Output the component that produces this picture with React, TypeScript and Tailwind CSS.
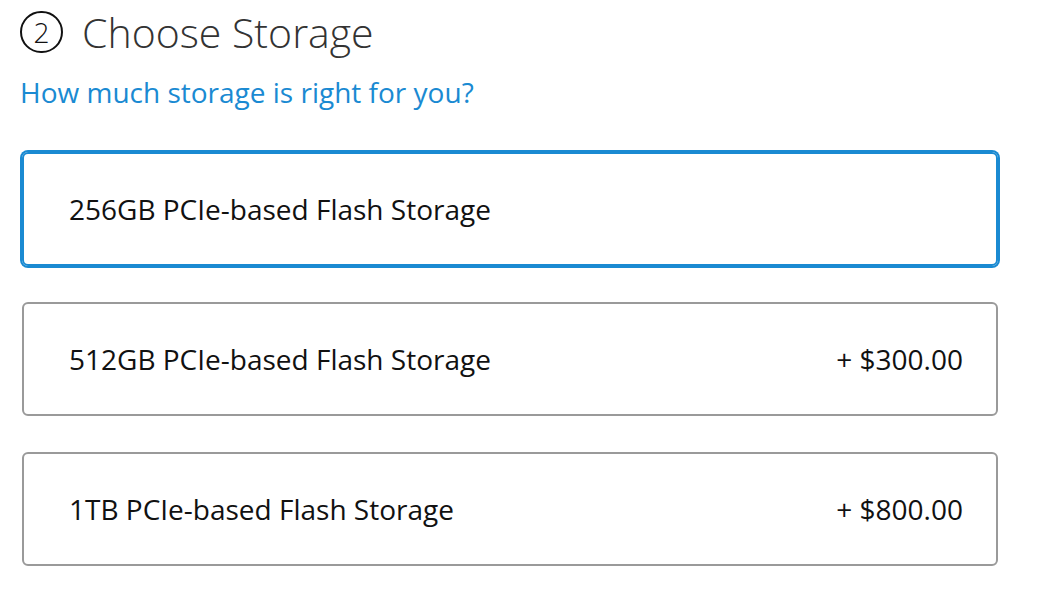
import React from "react";

const font = { fontFamily: '"Open Sans", "Noto Sans", sans-serif' };

function Option({ label, price, selected }: { label: string; price?: string; selected?: boolean }) {
  return (
    <div
      className={
        "flex h-[114px] items-center justify-between rounded-[6px] border-2 pl-[45px] pr-[33px] text-[28px] text-[#111] " +
        (selected ? "border-[#1a8ad2] shadow-[0_0_0_2px_#1a8ad2]" : "border-[#9a9a9a]")
      }
    >
      <span>{label}</span>
      {price ? <span>{price}</span> : null}
    </div>
  );
}

export default function App() {
  return (
    <div className="h-[612px] w-[1044px] bg-white" style={font}>
      <div className="flex items-center gap-[19px] pl-[20px] pt-[11px]">
        <div className="flex h-[42px] w-[43px] items-center justify-center rounded-full border-2 border-[#111] text-[28px] font-light leading-none text-[#111]">
          2
        </div>
        <div className="text-[41px] font-light leading-none text-[#333]">Choose Storage</div>
      </div>
      <div className="mt-[25px] pl-[20px] text-[28px] leading-none text-[#1a8ad2]">
        How much storage is right for you?
      </div>
      <div className="ml-[22px] mt-[46px] flex w-[976px] flex-col gap-[36px]">
        <Option label="256GB PCIe-based Flash Storage" selected />
        <Option label="512GB PCIe-based Flash Storage" price="+ $300.00" />
        <Option label="1TB PCIe-based Flash Storage" price="+ $800.00" />
      </div>
    </div>
  );
}
